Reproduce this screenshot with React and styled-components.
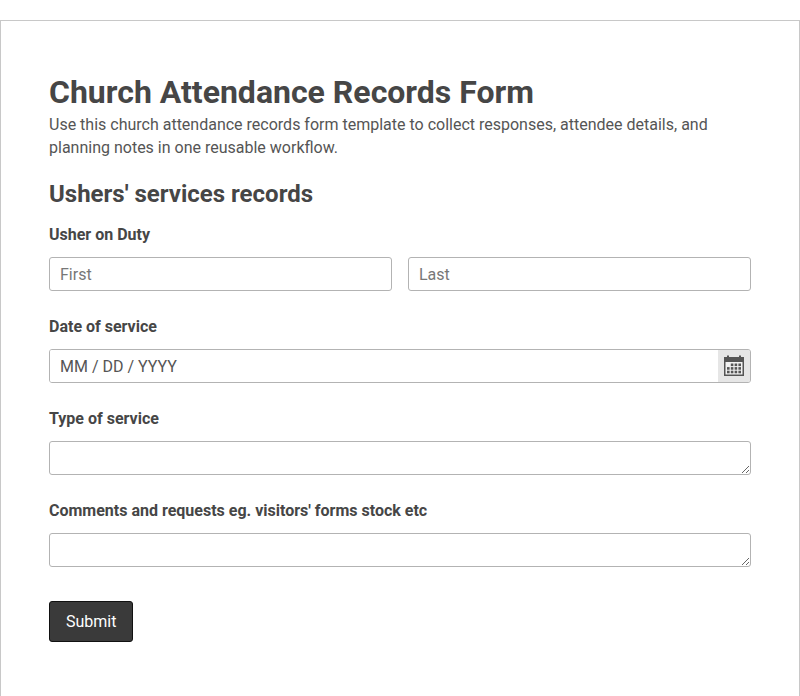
import React from "react";
import styled, { createGlobalStyle } from "styled-components";

const G = createGlobalStyle`
  body { margin: 0; font-family: Roboto, "Liberation Sans", sans-serif; color: #444; background: #fff; }
  * { box-sizing: border-box; }
`;
const Card = styled.div`
  margin-top: 20px; border: 1px solid #c8c8c8; border-bottom: none;
  padding: 52px 48px 56px 48px; min-height: 676px;
`;
const Title = styled.h1`
  font-size: 32px; font-weight: 700; margin: 0; line-height: 38px; color: #464646;
`;
const Desc = styled.p`
  font-size: 16px; line-height: 23px; margin: 2px 0 0; color: #555;
`;
const Section = styled.h2`
  font-size: 24px; font-weight: 700; margin: 20px 0 0; line-height: 30px; color: #464646;
`;
const Field = styled.div`
  margin-top: ${p => p.$first ? "16px" : "26px"};
`;
const Label = styled.div`
  font-size: 16px; font-weight: 700; line-height: 20px; margin-bottom: 12px; color: #464646;
`;
const Row = styled.div`
  display: grid; grid-template-columns: 1fr 1fr; gap: 16px;
`;
const Input = styled.input`
  width: 100%; height: 34px; border: 1px solid #b3b3b3; border-radius: 3px;
  padding: 0 10px; font: 16px Roboto, sans-serif; color: #444;
  &::placeholder { color: #777; }
`;
const DateWrap = styled.div`
  display: flex; height: 34px; border: 1px solid #b3b3b3; border-radius: 3px; overflow: hidden;
`;
const DateInput = styled.input`
  flex: 1; border: none; padding: 0 10px; font: 16px Roboto, sans-serif;
  &::placeholder { color: #555; }
`;
const CalBtn = styled.div`
  width: 32px; background: #e6e6e6; display: flex; align-items: center; justify-content: center;
`;
const Area = styled.textarea`
  display: block; width: 100%; height: 34px; border: 1px solid #b3b3b3; border-radius: 3px; resize: vertical;
  font: 16px Roboto, sans-serif; padding: 6px 10px;
`;
const Submit = styled.button`
  margin-top: 34px; height: 41px; padding: 0 16px; background: #3a3a3a; color: #fff;
  border: 1px solid #111; border-radius: 3px; font: 16px Roboto, sans-serif;
`;

const Cal = () => (
  <svg width="22" height="22" viewBox="0 0 22 22">
    <rect x="1" y="2" width="20" height="19" fill="#555" />
    <rect x="2.5" y="7" width="17" height="12.5" fill="#f2f2f2" />
    <rect x="4" y="0.5" width="2" height="3" fill="#555" />
    <rect x="16" y="0.5" width="2" height="3" fill="#555" />
    {[0, 1, 2].map(r => [0, 1, 2, 3].map(c => (
      (r === 0 && c === 0) ? null :
      <rect key={r + "-" + c} x={4 + c * 3.8} y={8.5 + r * 3.6} width="2.6" height="2.6" fill="#555" />
    )))}
  </svg>
);

export default function App() {
  return (
    <>
      <G />
      <Card>
        <Title>Church Attendance Records Form</Title>
        <Desc>Use this church attendance records form template to collect responses, attendee details, and planning notes in one reusable workflow.</Desc>
        <Section>Ushers' services records</Section>
        <Field $first>
          <Label>Usher on Duty</Label>
          <Row><Input placeholder="First" /><Input placeholder="Last" /></Row>
        </Field>
        <Field>
          <Label>Date of service</Label>
          <DateWrap><DateInput placeholder="MM / DD / YYYY" /><CalBtn><Cal /></CalBtn></DateWrap>
        </Field>
        <Field>
          <Label>Type of service</Label>
          <Area />
        </Field>
        <Field>
          <Label>Comments and requests eg. visitors' forms stock etc</Label>
          <Area />
        </Field>
        <Submit>Submit</Submit>
      </Card>
    </>
  );
}
